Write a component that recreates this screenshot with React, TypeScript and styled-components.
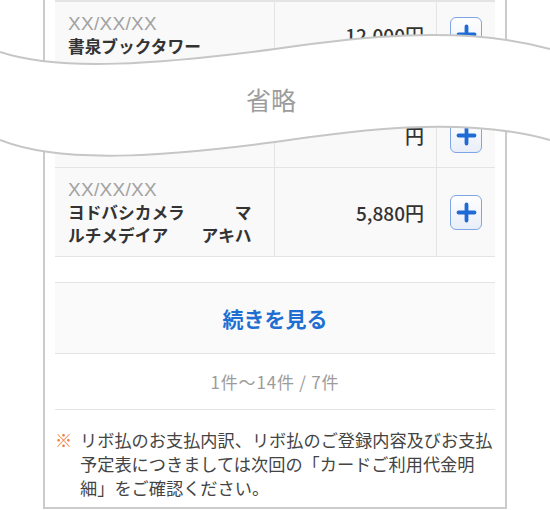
import React from "react";
import styled, { createGlobalStyle } from "styled-components";

const GlobalStyle = createGlobalStyle`
  html, body {
    margin: 0;
    padding: 0;
    background: #ffffff;
  }
  body {
    font-family: "Noto Sans CJK JP", "Noto Sans", sans-serif;
    color: #333333;
  }
  * { box-sizing: border-box; }
`;

const Page = styled.div`
  position: relative;
  width: 550px;
  height: 510px;
  overflow: hidden;
`;

const Frame = styled.div`
  margin-left: 43px;
  width: 464px;
  height: 509px;
  border: 2px solid #cbcbcb;
  border-top: 0;
  padding: 0 10px;
`;

const Table = styled.div`
  border-top: 2px solid #e4e4e4;
`;

const Row = styled.div<{ $minHeight?: number }>`
  display: grid;
  grid-template-columns: 220px 162px 1fr;
  background: #f9f9f9;
  border-bottom: 1px solid #e4e4e4;
  min-height: ${(p) => (p.$minHeight ? `${p.$minHeight}px` : "auto")};
`;

const InfoCell = styled.div`
  padding: 11px 13px 9px;
  border-right: 1px solid #e4e4e4;
`;

const DateText = styled.div`
  font-family: "Liberation Sans", Arial, sans-serif;
  font-size: 19px;
  letter-spacing: 0.3px;
  line-height: 22px;
  color: #a2a2a2;
`;

const NameLine = styled.div`
  font-size: 16.7px;
  line-height: 23px;
  font-weight: 700;
  color: #333333;
  white-space: pre;
`;

const AmountCell = styled.div`
  display: flex;
  align-items: center;
  justify-content: flex-end;
  padding-right: 12px;
  border-right: 1px solid #e4e4e4;
  font-size: 19px;
  font-weight: 500;
  color: #333333;
`;

const ActionCell = styled.div`
  display: flex;
  align-items: center;
  justify-content: center;
`;

const AddButton = styled.button`
  width: 32px;
  height: 35px;
  padding: 0;
  display: flex;
  align-items: center;
  justify-content: center;
  border: 1px solid #7ea6e6;
  border-radius: 6px;
  background: linear-gradient(#ffffff, #e8eef8);
  cursor: pointer;
`;

const MoreButton = styled.button`
  display: block;
  width: 100%;
  height: 72px;
  margin-top: 25px;
  border: 0;
  border-top: 1px solid #e4e4e4;
  border-bottom: 1px solid #e4e4e4;
  background: #fafafa;
  font-family: "Noto Sans CJK JP", sans-serif;
  font-size: 21px;
  font-weight: 700;
  color: #1f6fd2;
  cursor: pointer;
`;

const Counter = styled.div`
  height: 56px;
  display: flex;
  align-items: center;
  justify-content: center;
  border-bottom: 1px solid #e4e4e4;
  font-size: 17px;
  letter-spacing: 0.8px;
  color: #9c9c9c;
`;

const Note = styled.div`
  display: flex;
  padding-top: 18px;
  font-size: 17.2px;
  line-height: 24px;
  color: #444444;
`;

const NoteMark = styled.span`
  flex: 0 0 25px;
  color: #f07c35;
`;

const NoteText = styled.p`
  margin: 0;
  flex: 1;
`;

const Omission = styled.div`
  position: absolute;
  left: 0;
  top: 0;
  width: 550px;
  height: 170px;
  display: flex;
  align-items: center;
  justify-content: center;
  padding: 27px 8px 0 0;
  pointer-events: none;
`;

const WaveSvg = styled.svg`
  position: absolute;
  left: 0;
  top: 0;
`;

const OmissionLabel = styled.span`
  position: relative;
  font-size: 25px;
  color: #9c9c9c;
`;

const PlusIcon = () => (
  <svg width="21" height="21" viewBox="0 0 21 21">
    <path d="M10.5 2.5 V18.5 M2.5 10.5 H18.5" stroke="#1e6bd6" strokeWidth="3.8" strokeLinecap="round" />
  </svg>
);

const TOP = "M0,52 C60,72 160,64 275,49 C350,38 460,24 550,49";
const BOTTOM = "M0,140 C60,164 160,157 275,142 C350,131 460,115 550,140";
const FILL =
  "M0,52 C60,72 160,64 275,49 C350,38 460,24 550,49 L550,140 C460,115 350,131 275,142 C160,157 60,164 0,140 Z";

export default function App() {
  return (
    <>
      <GlobalStyle />
      <Page>
        <Frame>
          <Table>
            <Row>
              <InfoCell>
                <DateText>XX/XX/XX</DateText>
                <NameLine>書泉ブックタワー</NameLine>
              </InfoCell>
              <AmountCell>12,000円</AmountCell>
              <ActionCell>
                <AddButton aria-label="追加">
                  <PlusIcon />
                </AddButton>
              </ActionCell>
            </Row>
            <Row $minHeight={36}>
              <InfoCell />
              <AmountCell />
              <ActionCell />
            </Row>
            <Row $minHeight={64}>
              <InfoCell>
                <DateText>XX/XX/XX</DateText>
              </InfoCell>
              <AmountCell>円</AmountCell>
              <ActionCell>
                <AddButton aria-label="追加">
                  <PlusIcon />
                </AddButton>
              </ActionCell>
            </Row>
            <Row>
              <InfoCell>
                <DateText>XX/XX/XX</DateText>
                <NameLine>{"ヨドバシカメラ\u3000\u3000\u3000マ"}</NameLine>
                <NameLine>{"ルチメデイア\u3000\u3000アキハ"}</NameLine>
              </InfoCell>
              <AmountCell>5,880円</AmountCell>
              <ActionCell>
                <AddButton aria-label="追加">
                  <PlusIcon />
                </AddButton>
              </ActionCell>
            </Row>
          </Table>
          <MoreButton>続きを見る</MoreButton>
          <Counter>1件〜14件 / 7件</Counter>
          <Note>
            <NoteMark>※</NoteMark>
            <NoteText>
              リボ払のお支払内訳、リボ払のご登録内容及びお支払予定表につきましては次回の「カードご利用代金明細」をご確認ください。
            </NoteText>
          </Note>
        </Frame>
        <Omission>
          <WaveSvg width="550" height="170" viewBox="0 0 550 170">
            <path d={FILL} fill="#ffffff" />
            <path d={TOP} fill="none" stroke="#c6c6c6" strokeWidth="2" />
            <path d={BOTTOM} fill="none" stroke="#c6c6c6" strokeWidth="2" />
          </WaveSvg>
          <OmissionLabel>省略</OmissionLabel>
        </Omission>
      </Page>
    </>
  );
}
